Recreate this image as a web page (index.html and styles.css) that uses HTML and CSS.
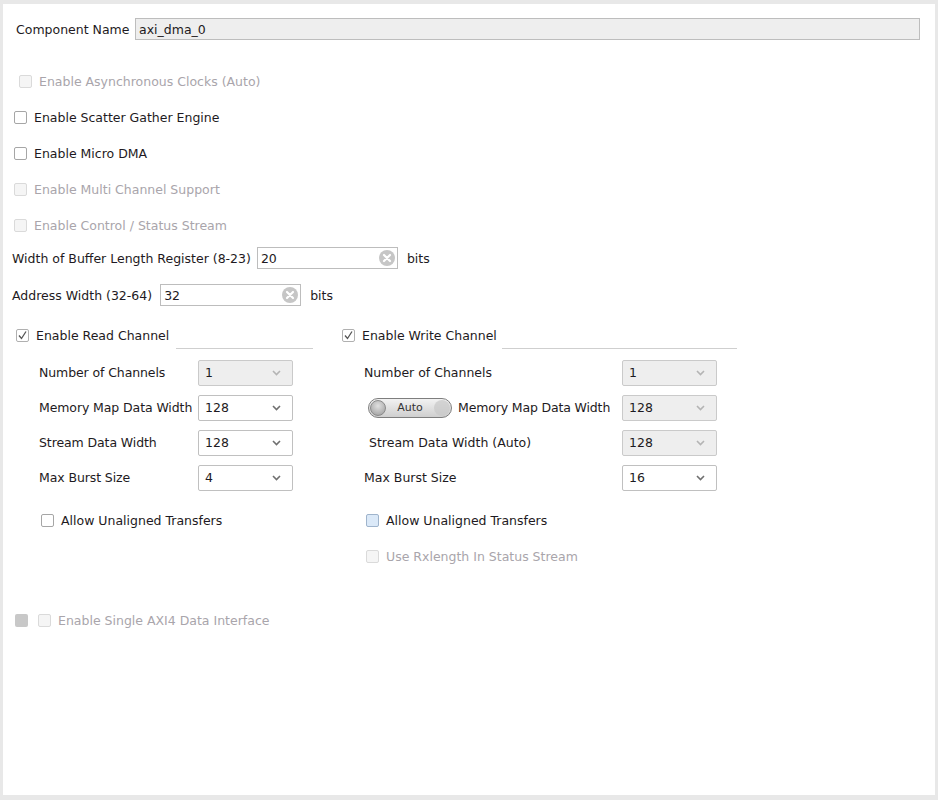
FILE: index.html
```html
<!DOCTYPE html>
<html>
<head>
<meta charset="utf-8">
<link rel="stylesheet" href="styles.css">
</head>
<body>
<div class="panel">
  <div class="name-row">
    <span class="lbl">Component Name</span>
    <div class="name-input">axi_dma_0</div>
  </div>

  <div class="row cb-row indent-async disabled"><span class="cb"></span><span>Enable Asynchronous Clocks (Auto)</span></div>
  <div class="row cb-row"><span class="cb"></span><span>Enable Scatter Gather Engine</span></div>
  <div class="row cb-row"><span class="cb"></span><span>Enable Micro DMA</span></div>
  <div class="row cb-row disabled"><span class="cb"></span><span>Enable Multi Channel Support</span></div>
  <div class="row cb-row disabled"><span class="cb"></span><span>Enable Control / Status Stream</span></div>

  <div class="row field-row">
    <span class="lbl">Width of Buffer Length Register (8-23)</span>
    <div class="text-input"><span>20</span><span class="clear"><svg width="16" height="16" viewBox="0 0 16 16"><circle cx="8" cy="8" r="8" fill="#c6c6c6"/><path d="M5 5 L11 11 M11 5 L5 11" stroke="#fff" stroke-width="2.2" stroke-linecap="round"/></svg></span></div>
    <span class="unit">bits</span>
  </div>
  <div class="row field-row addr">
    <span class="lbl">Address Width (32-64)</span>
    <div class="text-input"><span>32</span><span class="clear"><svg width="16" height="16" viewBox="0 0 16 16"><circle cx="8" cy="8" r="8" fill="#c6c6c6"/><path d="M5 5 L11 11 M11 5 L5 11" stroke="#fff" stroke-width="2.2" stroke-linecap="round"/></svg></span></div>
    <span class="unit">bits</span>
  </div>

  <div class="channels">
    <div class="col col-read">
      <div class="group-head">
        <span class="cb checked"><svg width="11" height="11" viewBox="0 0 11 11"><path d="M2 5.5 L4.5 8.5 L9 1.5" fill="none" stroke="#555" stroke-width="1.3"/></svg></span>
        <span class="head-text">Enable Read Channel</span>
        <span class="rule"></span>
      </div>
      <div class="group-body">
        <div class="sel-row"><span class="sel-lbl">Number of Channels</span><div class="select dis"><span>1</span><svg class="chev" width="9" height="6" viewBox="0 0 9 6"><path d="M1 1 L4.5 4.5 L8 1" fill="none" stroke="#b4b4b4" stroke-width="1.6"/></svg></div></div>
        <div class="sel-row"><span class="sel-lbl">Memory Map Data Width</span><div class="select"><span>128</span><svg class="chev" width="9" height="6" viewBox="0 0 9 6"><path d="M1 1 L4.5 4.5 L8 1" fill="none" stroke="#707070" stroke-width="1.6"/></svg></div></div>
        <div class="sel-row"><span class="sel-lbl">Stream Data Width</span><div class="select"><span>128</span><svg class="chev" width="9" height="6" viewBox="0 0 9 6"><path d="M1 1 L4.5 4.5 L8 1" fill="none" stroke="#707070" stroke-width="1.6"/></svg></div></div>
        <div class="sel-row"><span class="sel-lbl">Max Burst Size</span><div class="select"><span>4</span><svg class="chev" width="9" height="6" viewBox="0 0 9 6"><path d="M1 1 L4.5 4.5 L8 1" fill="none" stroke="#707070" stroke-width="1.6"/></svg></div></div>
        <div class="row cb-row sub"><span class="cb"></span><span>Allow Unaligned Transfers</span></div>
      </div>
    </div>

    <div class="col col-write">
      <div class="group-head">
        <span class="cb checked"><svg width="11" height="11" viewBox="0 0 11 11"><path d="M2 5.5 L4.5 8.5 L9 1.5" fill="none" stroke="#555" stroke-width="1.3"/></svg></span>
        <span class="head-text">Enable Write Channel</span>
        <span class="rule"></span>
      </div>
      <div class="group-body">
        <div class="sel-row"><span class="sel-lbl">Number of Channels</span><div class="select dis"><span>1</span><svg class="chev" width="9" height="6" viewBox="0 0 9 6"><path d="M1 1 L4.5 4.5 L8 1" fill="none" stroke="#b4b4b4" stroke-width="1.6"/></svg></div></div>
        <div class="sel-row"><span class="sel-lbl toggle-lbl"><span class="toggle"><span class="knob"></span><span class="toggle-text">Auto</span><span class="ghost"></span></span><span class="tight">Memory Map Data Width</span></span><div class="select dis"><span>128</span><svg class="chev" width="9" height="6" viewBox="0 0 9 6"><path d="M1 1 L4.5 4.5 L8 1" fill="none" stroke="#b4b4b4" stroke-width="1.6"/></svg></div></div>
        <div class="sel-row"><span class="sel-lbl auto-lbl">Stream Data Width (Auto)</span><div class="select dis"><span>128</span><svg class="chev" width="9" height="6" viewBox="0 0 9 6"><path d="M1 1 L4.5 4.5 L8 1" fill="none" stroke="#b4b4b4" stroke-width="1.6"/></svg></div></div>
        <div class="sel-row"><span class="sel-lbl">Max Burst Size</span><div class="select"><span>16</span><svg class="chev" width="9" height="6" viewBox="0 0 9 6"><path d="M1 1 L4.5 4.5 L8 1" fill="none" stroke="#707070" stroke-width="1.6"/></svg></div></div>
        <div class="row cb-row sub"><span class="cb hover"></span><span>Allow Unaligned Transfers</span></div>
        <div class="row cb-row sub disabled"><span class="cb"></span><span>Use Rxlength In Status Stream</span></div>
      </div>
    </div>
  </div>

  <div class="row cb-row single disabled"><span class="gray-box"></span><span class="cb"></span><span>Enable Single AXI4 Data Interface</span></div>
</div>
</body>
</html>
```

FILE: styles.css
```css
html, body {
  margin: 0;
  padding: 0;
}
body {
  background: #e8e8e8;
  font-family: "DejaVu Sans", Verdana, sans-serif;
  font-size: 12.5px;
  color: #1e1a22;
}
.panel {
  margin: 4px 3px 0 3px;
  width: 932px;
  height: 791px;
  background: #ffffff;
  box-sizing: border-box;
  padding-top: 14px;
}
.name-row {
  display: flex;
  align-items: center;
  height: 22px;
  padding-left: 13px;
}
.name-row .lbl {
  width: 119px;
  padding-top: 1px;
}
.name-input {
  width: 785px;
  height: 22px;
  box-sizing: border-box;
  border: 1px solid #bdbdbd;
  background: #eeeeee;
  display: flex;
  align-items: center;
  padding-left: 3px;
  padding-top: 1px;
}
.row {
  display: flex;
  align-items: center;
  height: 36px;
}
.cb-row {
  padding-left: 11px;
}
.cb-row .cb {
  margin-right: 7px;
}
.name-row + .row {
  margin-top: 23px;
}
.indent-async {
  padding-left: 16px;
}
.disabled {
  color: #a9a5ab;
}
.cb {
  display: inline-flex;
  align-items: center;
  justify-content: center;
  width: 13px;
  height: 13px;
  box-sizing: border-box;
  border: 1px solid #a6a6a6;
  border-radius: 2px;
  background: #ffffff;
  flex: none;
}
.disabled .cb {
  border-color: #dadada;
  background: #f5f5f5;
}
.cb.hover {
  background: #dbe9f8;
  border-color: #9fb4cc;
}
.field-row {
  height: 30px;
  padding-left: 9px;
}
.field-row .lbl {
  margin-right: 6px;
}
.addr {
  margin-top: 7px;
}
.addr .lbl {
  margin-right: 8px;
}
.text-input {
  width: 141px;
  height: 22px;
  box-sizing: border-box;
  border: 1px solid #bdbdbd;
  display: flex;
  align-items: center;
  justify-content: space-between;
  padding: 0 2px 0 3px;
}
.clear {
  display: flex;
}
.unit {
  margin-left: 9px;
}
.channels {
  display: flex;
  margin-top: 13px;
}
.col-read {
  margin-left: 13px;
  width: 297px;
}
.col-write {
  margin-left: 29px;
  width: 395px;
}
.group-head {
  display: flex;
  align-items: center;
  height: 26px;
  padding-bottom: 2px;
  box-sizing: border-box;
}
.group-head .cb {
  margin-right: 7px;
}
.cb.checked {
  border-color: #b0b0b0;
}
.head-text {
  margin-right: 7px;
}
.col-write .head-text {
  margin-right: 5px;
}
.rule {
  flex: 1;
  align-self: flex-end;
  height: 0;
  border-bottom: 1px solid #cfcfcf;
  margin-bottom: -2px;
}
.group-body {
  padding-top: 6px;
}
.sel-row {
  display: flex;
  align-items: center;
  height: 35px;
}
.col-read .sel-lbl {
  width: 159px;
  padding-left: 23px;
  box-sizing: content-box;
  letter-spacing: -0.1px;
}
.col-write .sel-lbl {
  width: 258px;
  padding-left: 22px;
}
.col-write .toggle-lbl {
  display: flex;
  align-items: center;
  padding-left: 26px;
  width: 254px;
}
.tight {
  letter-spacing: -0.15px;
}
.col-write .auto-lbl {
  padding-left: 27px;
  width: 253px;
}
.select {
  width: 95px;
  height: 26px;
  box-sizing: border-box;
  border: 1px solid #c0c0c0;
  border-radius: 2px;
  background: #ffffff;
  display: flex;
  align-items: center;
  justify-content: space-between;
  padding: 0 11px 0 6px;
}
.select.dis {
  background: #eeeeee;
  border-color: #cacaca;
}
.chev {
  display: block;
}
.toggle {
  position: relative;
  display: inline-flex;
  align-items: center;
  justify-content: center;
  width: 84px;
  height: 20px;
  box-sizing: border-box;
  border: 1px solid #7e7e7e;
  border-radius: 10px;
  background: linear-gradient(#f2f2f2, #cfcfcf);
  margin-right: 6px;
  font-size: 11px;
  color: #333;
}
.knob {
  position: absolute;
  left: 1px;
  top: 1px;
  width: 16px;
  height: 16px;
  border-radius: 50%;
  border: 1px solid #8a8a8a;
  box-sizing: border-box;
  background: radial-gradient(circle at 50% 35%, #e0e0e0, #9a9a9a);
}
.ghost {
  position: absolute;
  right: 1px;
  top: 1px;
  width: 16px;
  height: 16px;
  border-radius: 50%;
  background: #c8c8c8;
  opacity: 0.7;
}
.toggle-text {
  position: relative;
}
.sub {
  padding-left: 25px;
}
.col-write .sub {
  padding-left: 24px;
}
.sel-row + .sub {
  margin-top: 7px;
}
.single {
  margin-top: 28px;
  padding-left: 12px;
}
.gray-box {
  width: 13px;
  height: 13px;
  border-radius: 2px;
  background: #c8c8c8;
  margin-right: 10px;
  flex: none;
}
```
